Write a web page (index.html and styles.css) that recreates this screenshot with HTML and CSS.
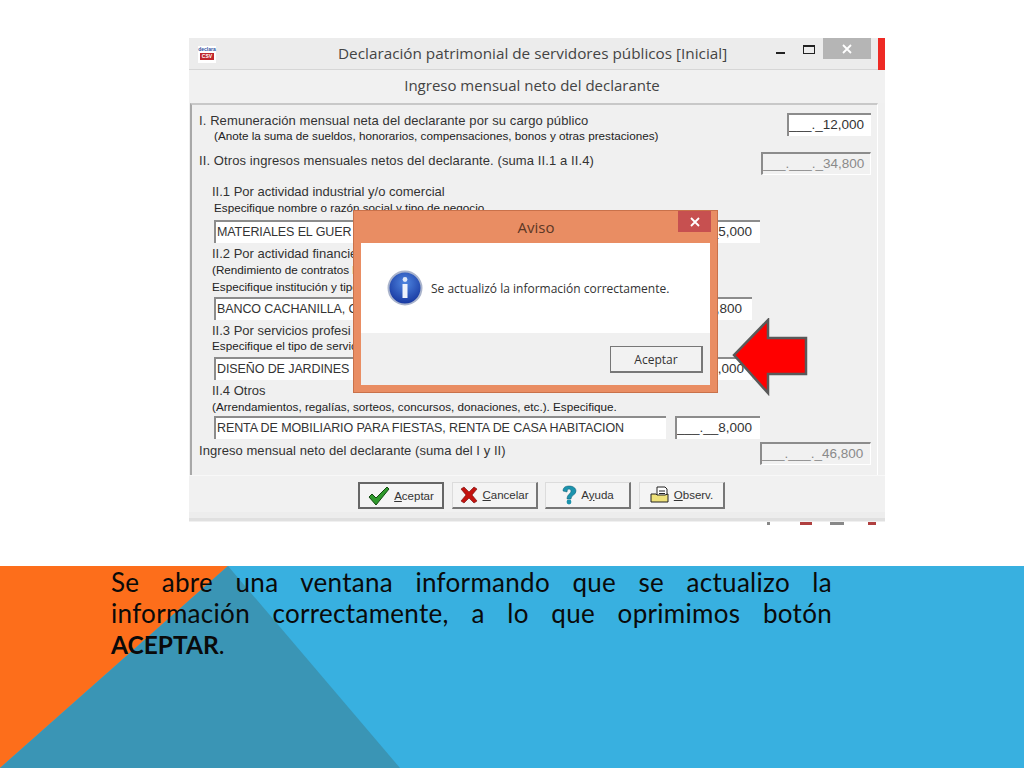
FILE: index.html
```html
<!DOCTYPE html>
<html lang="es">
<head>
<meta charset="utf-8">
<title>Declaración patrimonial</title>
<link rel="stylesheet" href="styles.css">
</head>
<body>
<main class="slide">
  <section class="shot">
    <div class="window">
      <header class="titlebar">
        <div class="logo"><span class="logo-a">declara</span><span class="logo-b">CSV</span></div>
        <div class="title">Declaración patrimonial de servidores públicos [Inicial]</div>
        <div class="controls">
          <span class="min"></span>
          <span class="max"></span>
          <span class="close"><svg width="12" height="12" viewBox="0 0 12 12"><path d="M2 2l8 8M10 2l-8 8" stroke="#fff" stroke-width="1.8"/></svg></span>
        </div>
        <span class="redbar"></span>
      </header>
      <div class="subtitle">Ingreso mensual neto del declarante</div>
      <div class="panel">
        <div class="row r1">
          <div>
            <div class="l">I. Remuneración mensual neta del declarante por su cargo público</div>
            <div class="s ind-a">(Anote la suma de sueldos, honorarios, compensaciones, bonos y otras prestaciones)</div>
          </div>
          <div class="field w84">___._12,000</div>
        </div>
        <div class="row r2">
          <div class="l">II. Otros ingresos mensuales netos del declarante. (suma II.1 a II.4)</div>
          <div class="field off w110">___.___._34,800</div>
        </div>
        <div class="sect s1">
          <div class="l">II.1 Por actividad industrial y/o comercial</div>
          <div class="s ind-b t2">Especifique nombre o razón social y tipo de negocio</div>
          <div class="inputs t5 r760">
            <div class="field name">MATERIALES EL GUER</div>
            <div class="field amt">___.__5,000</div>
          </div>
        </div>
        <div class="sect s2">
          <div class="l">II.2 Por actividad financie</div>
          <div class="s t2">(Rendimiento de contratos b</div>
          <div class="s t3">Especifique institución y tipo</div>
          <div class="inputs t3 r752">
            <div class="field name">BANCO CACHANILLA, C</div>
            <div class="field amt">___.__,800</div>
          </div>
        </div>
        <div class="sect s3">
          <div class="l">II.3 Por servicios profesi</div>
          <div class="s t1">Especifique el tipo de servic</div>
          <div class="inputs t4 r752">
            <div class="field name">DISEÑO DE JARDINES</div>
            <div class="field amt">___.__1,000</div>
          </div>
        </div>
        <div class="sect s3">
          <div class="l">II.4 Otros</div>
          <div class="s t2">(Arrendamientos, regalías, sorteos, concursos, donaciones, etc.). Especifique.</div>
          <div class="inputs t2 r760">
            <div class="field name">RENTA DE MOBILIARIO PARA FIESTAS, RENTA DE CASA HABITACION</div>
            <div class="field amt">___.__8,000</div>
          </div>
        </div>
        <div class="row r3">
          <div class="l">Ingreso mensual neto del declarante (suma del I y II)</div>
          <div class="field off w111">___.___._46,800</div>
        </div>
      </div>
      <footer class="actions">
        <button class="btn first">
          <svg width="22" height="20" viewBox="0 0 22 20"><path d="M1 11l3-3 4 4L19 1l2 2L8 19z" fill="#2f9a2c" stroke="#12480f" stroke-width="1"/></svg>
          <span><u>A</u>ceptar</span>
        </button>
        <button class="btn">
          <svg width="18" height="18" viewBox="0 0 18 18"><path d="M1 3l3-2 5 5 5-5 3 2-5 6 5 6-3 2-5-5-5 5-3-2 5-6z" fill="#c3130f" stroke="#6e0a08" stroke-width=".6"/></svg>
          <span><u>C</u>ancelar</span>
        </button>
        <button class="btn third">
          <svg width="16" height="20" viewBox="0 0 16 20"><path d="M2 6C2 2 5 1 8 1c4 0 7 2 7 5 0 4-5 4-5 8H6c0-5 4-5 4-8 0-1-1-2-2-2S6 5 6 7z" fill="#1c93ad" stroke="#0d5a70" stroke-width=".5"/><circle cx="8" cy="17" r="2.4" fill="#1c93ad"/></svg>
          <span>A<u>y</u>uda</span>
        </button>
        <button class="btn">
          <svg width="20" height="18" viewBox="0 0 20 18"><path d="M7 1h8l2 2v9H7z" fill="#fff" stroke="#222"/><path d="M9 5h6M9 7.5h6M9 10h6" stroke="#222"/><path d="M1 8h5l1 1h8l3-1v8H1z" fill="#efe27a" stroke="#222"/></svg>
          <span><u>O</u>bserv.</span>
        </button>
      </footer>
      <div class="strip"></div>

      <div class="dialog">
        <div class="dlg-title">
          <span>Aviso</span>
          <span class="dlg-close"><svg width="12" height="12" viewBox="0 0 12 12"><path d="M2 2l8 8M10 2l-8 8" stroke="#fff" stroke-width="1.8"/></svg></span>
        </div>
        <div class="dlg-msg">
          <svg width="36" height="36" viewBox="0 0 36 36">
            <defs>
              <radialGradient id="ib" cx="50%" cy="35%" r="70%">
                <stop offset="0" stop-color="#4f86e0"/>
                <stop offset="1" stop-color="#12309a"/>
              </radialGradient>
            </defs>
            <circle cx="18" cy="18" r="16.5" fill="url(#ib)" stroke="#aab4cc" stroke-width="2"/>
            <circle cx="18" cy="9.5" r="2.4" fill="#dfe8f8"/>
            <path d="M15.5 14h5v14h-5z" fill="#eef3fc"/>
          </svg>
          <span>Se actualizó la información correctamente.</span>
        </div>
        <div class="dlg-foot"><button class="dlg-btn">Aceptar</button></div>
      </div>

      <svg class="arrow" width="78" height="78" viewBox="0 0 78 78">
        <path d="M2 37L36 2v18h38v36H36v19z" fill="#f00" stroke="#595959" stroke-width="2.5"/>
      </svg>
    </div>
    <div class="scrap"><span class="sc1"></span><span class="sc2"></span><span class="sc3"></span><span class="sc4"></span></div>
  </section>

  <section class="band">
    <div class="tri-orange"></div>
    <div class="tri-dark"></div>
    <p class="caption">
      <span class="just">Se abre una ventana informando que se actualizo la</span>
      <span class="just">información correctamente, a lo que oprimimos botón</span>
      <span class="last"><b>ACEPTAR</b>.</span>
    </p>
  </section>
</main>
</body>
</html>
```
FILE: styles.css
```css
* { box-sizing: border-box; }
html, body { margin: 0; padding: 0; background: #fff; }
.slide { width: 1024px; height: 768px; overflow: hidden; display: flex; flex-direction: column; }

.shot { height: 566px; padding: 38px 0 0 189px; }
.window { position: relative; width: 696px; height: 484px; background: #f0f0f0; display: flex; flex-direction: column; font-family: "Liberation Sans", Arial, sans-serif; color: #333; }

.titlebar { height: 32px; flex: none; display: flex; background: #ececec; border-bottom: 1px solid #d6d6d6; position: relative; }
.logo { width: 18px; height: 17px; margin: 8px 0 0 9px; background: #fff; display: flex; flex-direction: column; align-items: center; font-size: 5px; line-height: 7px; font-weight: bold; }
.logo-a { color: #2b4f9e; }
.logo-b { color: #fff; background: #c0272d; padding: 0 2px; }
.title { position: absolute; left: 149px; top: 4px; font-family: "Open Sans", sans-serif; font-size: 15.3px; line-height: 22px; color: #444; white-space: nowrap; }
.controls { margin-left: auto; display: flex; align-items: flex-start; }
.min { width: 9px; height: 2px; background: #222; margin: 14px 18px 0 0; }
.max { width: 12px; height: 9px; border: 1px solid #222; border-top-width: 2px; margin: 7px 8px 0 0; }
.close { width: 48px; height: 21px; background: #b5b5b5; display: flex; align-items: center; justify-content: center; margin-right: 7px; }
.redbar { width: 7px; height: 32px; background: #ee2a24; }

.subtitle { height: 33px; flex: none; text-align: center; font-family: "Open Sans", sans-serif; font-size: 15px; line-height: 31px; color: #444; padding-left: 2px; padding-right: 12px; background: #f1f1f1; }

.panel { width: 688px; height: 372px; flex: none; margin-left: 1px; padding: 8px 6px 0 7px; border-top: 2px solid #c8c8c8; border-left: 2px solid #a8a8a8; border-right: 1px solid #fff; background: #f0f0f0; font-size: 12px; }
.l { height: 15px; line-height: 15px; font-size: 13px; white-space: nowrap; color: #333; }
.s { height: 14px; line-height: 14px; font-size: 11.7px; white-space: nowrap; color: #222; }
.ind-a { margin: 1px 0 0 15px; }
.ind-b { padding-left: 2px; }
.t1 { margin-top: 1px; }
.t2 { margin-top: 2px; }
.t3 { margin-top: 3px; }
.t4 { margin-top: 4px; }
.t5 { margin-top: 5px; }

.row { display: flex; justify-content: space-between; align-items: flex-start; }
.r1 { height: 29px; }
.r1 .l { letter-spacing: .1px; }
.r2 { height: 23px; margin-top: 10px; }
.r2 .l { margin-top: 1px; letter-spacing: .1px; }
.r3 { height: 23px; margin-top: 3px; }
.r3 .l { margin-top: 1px; letter-spacing: .06px; }
.sect { padding-left: 13px; }
.s1 { margin-top: 9px; }
.s2 { margin-top: 3px; }
.s3 { margin-top: 3px; }

.field { height: 23px; line-height: 20px; background: #fff; border-top: 2px solid #8c8c8c; border-left: 2px solid #8c8c8c; font-size: 13.5px; color: #333; white-space: nowrap; overflow: hidden; text-align: right; padding-right: 10px; }
.field.off { background: #f1f1f1; color: #8a8a8a; border-right: 1px solid #fff; border-bottom: 1px solid #fff; }
.w84 { width: 84px; }
.w110 { width: 110px; }
.w111 { width: 111px; }
.inputs { display: flex; gap: 9px; padding-left: 2px; }
.r760 { width: 548px; }
.r752 { width: 540px; }
.name { flex: 1; text-align: left; padding: 0 0 0 1px; font-size: 12.5px; letter-spacing: -.1px; }
.amt { width: 85px; }

.actions { height: 37px; flex: none; display: flex; gap: 8px; padding: 6px 0 0 169px; background: #f1f1f1; border-top: 1px solid #f8f8f8; }
.btn { width: 86px; height: 27px; padding: 0; display: flex; align-items: center; justify-content: center; gap: 4px; font-family: "Liberation Sans", Arial, sans-serif; font-size: 11.5px; color: #333; background: #f4f4f4; border: 1px solid #dcdcdc; border-right: 2px solid #777; border-bottom: 2px solid #777; }
.btn.first { border: 2px solid #666; }
.btn.third { margin-left: -1px; }
.strip { height: 9px; flex: none; background: #ededed; border-bottom: 3px solid #e0e0e0; }

.dialog { position: absolute; left: 164px; top: 172px; width: 365px; height: 183px; background: #e98d63; border: 1px solid #c9714a; padding: 0 7px 7px; display: flex; flex-direction: column; }
.dlg-title { height: 32px; flex: none; position: relative; text-align: center; font-family: "Open Sans", sans-serif; font-size: 15px; line-height: 32px; color: #5c3826; padding-left: 1px; }
.dlg-close { position: absolute; right: -1px; top: 0; width: 33px; height: 21px; background: #c75050; display: flex; align-items: center; justify-content: center; }
.dlg-msg { height: 90px; flex: none; background: #fff; display: flex; align-items: center; gap: 8px; padding: 0 0 0 26px; font-family: "Open Sans", sans-serif; font-size: 12px; color: #333; font-weight: 500; }
.dlg-foot { flex: 1; background: #f0f0f0; display: flex; justify-content: flex-end; align-items: flex-start; padding: 13px 7px 0 0; }
.dlg-btn { width: 93px; height: 27px; padding: 0; font-family: "Open Sans", sans-serif; font-size: 12px; color: #333; background: #f2f2f2; border: 1px solid #777; border-right-width: 2px; border-bottom-width: 2px; }

.arrow { position: absolute; left: 543px; top: 280px; }

.scrap { height: 3px; margin-left: 578px; display: flex; width: 118px; }
.scrap span { height: 3px; background: #888; display: block; }
.sc1 { width: 3px; margin-right: 30px; }
.sc2 { width: 12px; margin-right: 18px; background: #b04040 !important; }
.sc3 { width: 14px; margin-right: 24px; }
.sc4 { width: 8px; background: #b04040 !important; }

.band { height: 202px; flex: none; position: relative; background: #38b0e0; }
.tri-orange { position: absolute; inset: 0; background: #fd6e1b; clip-path: polygon(0 0, 228px 0, 0 100%); }
.tri-dark { position: absolute; inset: 0; background: #3a95b5; clip-path: polygon(228px 0, 400px 100%, 0 100%); }
.caption { position: relative; margin: 0; padding: 1px 0 0 111px; width: 832px; font-family: "Lato", sans-serif; font-size: 26px; line-height: 31px; color: #0a0a0a; letter-spacing: .3px; }
.just { display: block; text-align: justify; text-align-last: justify; }
.last { display: block; font-size: 24.5px; letter-spacing: 0; }
.last b { font-weight: 700; }
```
